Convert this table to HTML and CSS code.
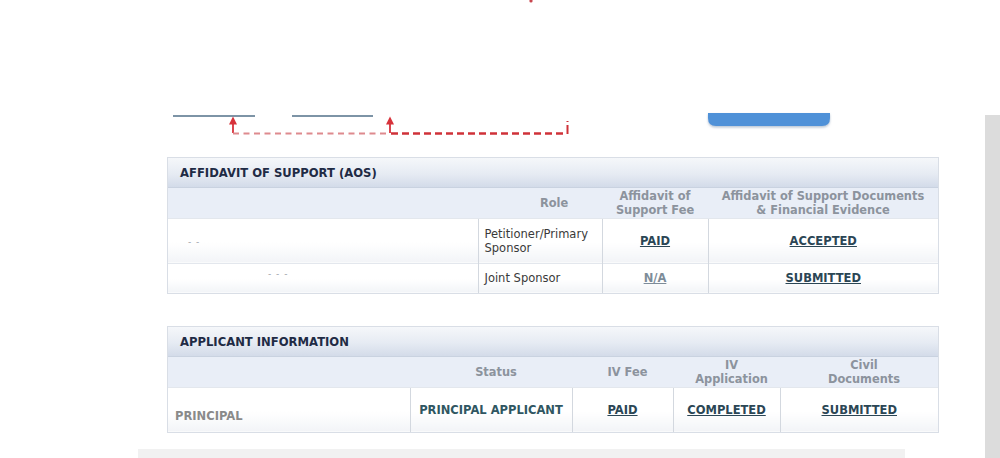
FILE: index.html
```html
<!DOCTYPE html>
<html>
<head>
<meta charset="utf-8">
<link rel="stylesheet" href="styles.css">
</head>
<body>
<div class="page">
  <div class="main">
    <svg class="annot" width="985" height="157" viewBox="0 0 985 157">
      <defs>
        <filter id="soft" x="-10%" y="-50%" width="120%" height="250%">
          <feGaussianBlur stdDeviation="0.5"/>
        </filter>
        <filter id="shadow" x="-10%" y="-50%" width="120%" height="250%">
          <feDropShadow dx="0" dy="1.5" stdDeviation="1.2" flood-color="#6a86a8" flood-opacity="0.5"/>
        </filter>
      </defs>
      <circle cx="531" cy="1" r="1.6" fill="#c8474f"/>
      <g filter="url(#soft)">
        <line x1="173" y1="116" x2="255" y2="116" stroke="#7d94a6" stroke-width="1.8"/>
        <line x1="292" y1="116" x2="373" y2="116" stroke="#7d94a6" stroke-width="1.8"/>
        <path d="M233 133 V121" stroke="#d7323a" stroke-width="1.8" fill="none"/>
        <path d="M229 124.5 L233 116.5 L237 124.5 Z" fill="#d7323a"/>
        <path d="M390 133 V121" stroke="#d7323a" stroke-width="1.8" fill="none"/>
        <path d="M386 124.5 L390 116.5 L394 124.5 Z" fill="#d7323a"/>
        <path d="M233 133.5 H390" stroke="#de8a8e" stroke-width="2" stroke-dasharray="6 4.5" fill="none"/>
        <path d="M391 133.5 H567" stroke="#cf3038" stroke-width="2.4" stroke-dasharray="7 4" fill="none"/>
        <path d="M567.5 134 V121" stroke="#cf3038" stroke-width="2" stroke-dasharray="9 3" fill="none"/>
      </g>
      <path d="M708 113 H830 V118 Q830 126 822 126 H716 Q708 126 708 118 Z" fill="#5091d8" filter="url(#shadow)"/>
    </svg>

    <section class="panel aos">
      <div class="panel-title">AFFIDAVIT OF SUPPORT (AOS)</div>
      <table class="grid">
        <colgroup>
          <col class="c-name1"><col class="c-role"><col class="c-fee"><col class="c-docs">
        </colgroup>
        <tr class="colhead">
          <th></th>
          <th class="th-role">Role</th>
          <th>Affidavit of<br>Support Fee</th>
          <th>Affidavit of Support Documents<br>&amp; Financial Evidence</th>
        </tr>
        <tr class="row tall">
          <td class="name"><span class="blur">- -</span></td>
          <td class="role">Petitioner/Primary<br>Sponsor</td>
          <td class="ctr"><a class="link">PAID</a></td>
          <td class="ctr"><a class="link">ACCEPTED</a></td>
        </tr>
        <tr class="row short">
          <td class="name"><span class="blur blur2">- - -</span></td>
          <td class="role">Joint Sponsor</td>
          <td class="ctr"><a class="link muted">N/A</a></td>
          <td class="ctr"><a class="link">SUBMITTED</a></td>
        </tr>
      </table>
    </section>

    <section class="panel applicant">
      <div class="panel-title">APPLICANT INFORMATION</div>
      <table class="grid">
        <colgroup>
          <col class="c-name2"><col class="c-status"><col class="c-ivfee"><col class="c-ivapp"><col class="c-civil">
        </colgroup>
        <tr class="colhead">
          <th></th>
          <th class="th-pad">Status</th>
          <th class="th-pad">IV Fee</th>
          <th class="th-pad">IV<br>Application</th>
          <th class="th-pad">Civil<br>Documents</th>
        </tr>
        <tr class="row tall">
          <td class="principal">PRINCIPAL</td>
          <td class="ctr status">PRINCIPAL APPLICANT</td>
          <td class="ctr"><a class="link">PAID</a></td>
          <td class="ctr"><a class="link">COMPLETED</a></td>
          <td class="ctr"><a class="link">SUBMITTED</a></td>
        </tr>
      </table>
    </section>

    <div class="footer-strip"></div>
  </div>
  <div class="sidebar"></div>
</div>
</body>
</html>
```

FILE: styles.css
```css
html, body {
  margin: 0;
  padding: 0;
  background: #ffffff;
}

body {
  font-family: "DejaVu Sans", Verdana, sans-serif;
  font-size: 11.5px;
  color: #333;
}

.page {
  display: flex;
  height: 458px;
  overflow: hidden;
}

.main {
  width: 985px;
  flex: none;
}

.sidebar {
  width: 15px;
  margin-top: 115px;
  background: #dcdcdc;
}

.annot {
  display: block;
}

.panel {
  margin-left: 167px;
  width: 772px;
  box-sizing: border-box;
  border: 1px solid #d9dee6;
}

.aos {
  margin-top: 0;
}

.applicant {
  margin-top: 32px;
}

.panel-title {
  height: 29px;
  line-height: 30px;
  padding-left: 12px;
  font-weight: bold;
  font-size: 11.6px;
  color: #1f2b45;
  background: linear-gradient(to bottom, #f5f7fa 0%, #e6ebf3 55%, #d3dbe9 100%);
  border-bottom: 1px solid #c9d2e0;
}

.grid {
  width: 100%;
  border-collapse: collapse;
  table-layout: fixed;
}

.c-name1 { width: 310px; }
.c-role { width: 124px; }
.c-fee { width: 106px; }
.c-docs { width: auto; }

.c-name2 { width: 242px; }
.c-status { width: 162px; }
.c-ivfee { width: 101px; }
.c-ivapp { width: 107px; }
.c-civil { width: auto; }

.colhead {
  height: 30px;
  background: #e9eef7;
}

.colhead th {
  font-weight: bold;
  font-size: 11.4px;
  line-height: 14px;
  color: #8c939d;
  text-align: center;
  padding: 0;
  vertical-align: middle;
}

.th-role {
  padding-left: 28px !important;
}

.th-pad {
  padding-left: 10px !important;
}

.row td {
  background: linear-gradient(to bottom, #ffffff 0%, #ffffff 55%, #f2f4f7 100%);
  border-top: 1px solid #e3e7ed;
  border-left: 1px solid #d3d8df;
  padding: 0;
  vertical-align: middle;
}

.row td:first-child {
  border-left: none;
}

.tall {
  height: 45px;
}

.short {
  height: 30px;
}

.name {
  padding-left: 20px !important;
}

.blur {
  color: #9aa0a8;
  font-size: 9px;
  letter-spacing: 1px;
}

.blur2 {
  margin-left: 80px;
  position: relative;
  top: -5px;
}

.role {
  padding-left: 6px !important;
  line-height: 14px;
  color: #3a3a3a;
}

.ctr {
  text-align: center;
}

.link {
  font-weight: bold;
  color: #2b4655;
  text-decoration: underline;
  cursor: pointer;
}

.link.muted {
  color: #7d8c99;
}

.principal {
  padding: 12px 0 0 7px !important;
  font-weight: bold;
  color: #8a8a8a;
}

.status {
  font-weight: bold;
  color: #2f5662;
}

.footer-strip {
  margin-top: 16px;
  margin-left: 138px;
  width: 767px;
  height: 12px;
  background: #f1f1f1;
}
```
